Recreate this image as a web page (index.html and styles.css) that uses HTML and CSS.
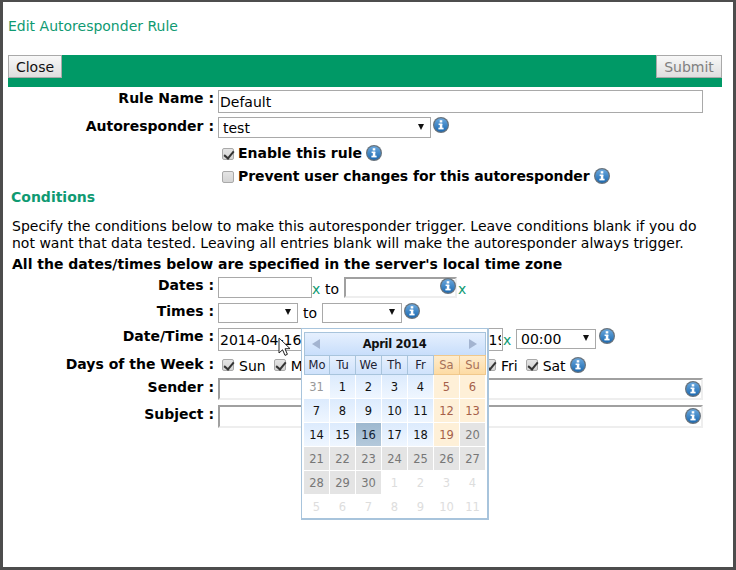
FILE: index.html
```html
<!DOCTYPE html>
<html lang="en">
<head>
<meta charset="utf-8">
<title>Edit Autoresponder Rule</title>
<link rel="stylesheet" href="styles.css">
</head>
<body>
<svg class="defs" width="0" height="0" aria-hidden="true">
  <defs>
    <linearGradient id="ig" x1="0" y1="0" x2="0" y2="1">
      <stop offset="0" stop-color="#6aa8de"/>
      <stop offset="1" stop-color="#1c69b0"/>
    </linearGradient>
    <symbol id="info" viewBox="0 0 16 16">
      <circle cx="8" cy="8" r="8" fill="#67727c"/>
      <circle cx="8" cy="8" r="6.8" fill="url(#ig)"/>
      <rect x="6.7" y="3.2" width="2.6" height="2.3" fill="#fff"/>
      <rect x="5.6" y="6.5" width="3.7" height="1.5" fill="#fff"/>
      <rect x="6.8" y="7" width="2.5" height="4" fill="#fff"/>
      <rect x="5.4" y="10.7" width="5.2" height="1.7" fill="#fff"/>
    </symbol>
  </defs>
</svg>
<div class="window">
  <div class="title">Edit Autoresponder Rule</div>
  <div class="bar">
    <button class="btn" type="button">Close</button>
    <button class="btn btn-off" type="button">Submit</button>
  </div>

  <div class="row row-name">
    <div class="label">Rule Name :</div>
    <input class="text wide" type="text" value="Default">
  </div>
  <div class="row row-auto">
    <div class="label">Autoresponder :</div>
    <span class="sel sel-auto"><select><option>test</option></select></span>
    <svg class="info"><use href="#info"/></svg>
  </div>
  <div class="row row-check1">
    <div class="label"></div>
    <label class="opt"><input class="cb" type="checkbox" checked>Enable this rule</label>
    <svg class="info"><use href="#info"/></svg>
  </div>
  <div class="row row-check2">
    <div class="label"></div>
    <label class="opt opt-long"><input class="cb" type="checkbox">Prevent user changes for this autoresponder</label>
    <svg class="info"><use href="#info"/></svg>
  </div>

  <h2 class="heading">Conditions</h2>
  <p class="intro">Specify the conditions below to make this autoresponder trigger. Leave conditions blank if you do not want that data tested. Leaving all entries blank will make the autoresponder always trigger.</p>
  <p class="note">All the dates/times below are specified in the server's local time zone</p>

  <div class="row row-dates">
    <div class="label">Dates :</div>
    <input class="text date" type="text">
    <span class="clear">x</span>
    <span class="to">to</span>
    <input class="text inset date-to" type="text">
    <svg class="info in-field"><use href="#info"/></svg>
    <span class="clear after-field">x</span>
  </div>
  <div class="row row-times">
    <div class="label">Times :</div>
    <span class="sel sel-time"><select><option></option></select></span>
    <span class="to to-time">to</span>
    <span class="sel sel-time"><select><option></option></select></span>
    <svg class="info"><use href="#info"/></svg>
  </div>
  <div class="row row-dt">
    <div class="label">Date/Time :</div>
    <input class="text dt1" type="text" value="2014-04-16">
    <input class="text dt2" type="text" value="2014-04-19">
    <span class="clear">x</span>
    <span class="sel sel-clock"><select><option>00:00</option></select></span>
    <svg class="info"><use href="#info"/></svg>
  </div>
  <div class="row row-days">
    <div class="label">Days of the Week :</div>
    <div class="days">
      <label class="day"><input class="cb" type="checkbox" checked>Sun</label>
      <label class="day"><input class="cb" type="checkbox" checked>Mon</label>
      <label class="day"><input class="cb" type="checkbox" checked>Tue</label>
      <label class="day"><input class="cb" type="checkbox" checked>Wed</label>
      <label class="day"><input class="cb" type="checkbox" checked>Thu</label>
      <label class="day"><input class="cb" type="checkbox" checked>Fri</label>
      <label class="day"><input class="cb" type="checkbox" checked>Sat</label>
    </div>
    <svg class="info"><use href="#info"/></svg>
  </div>
  <div class="row row-sender">
    <div class="label">Sender :</div>
    <input class="text inset wide" type="text">
    <svg class="info in-wide"><use href="#info"/></svg>
  </div>
  <div class="row row-subject">
    <div class="label">Subject :</div>
    <input class="text inset wide" type="text">
    <svg class="info in-wide"><use href="#info"/></svg>
  </div>

  <div class="calendar">
    <div class="cal-head">
      <span class="arrow arrow-l"></span>
      <span class="cal-title">April 2014</span>
      <span class="arrow arrow-r"></span>
    </div>
    <div class="cal-grid">
      <div class="wd">Mo</div><div class="wd">Tu</div><div class="wd">We</div><div class="wd">Th</div><div class="wd">Fr</div><div class="wd we">Sa</div><div class="wd we">Su</div>
      <div class="c other">31</div><div class="c">1</div><div class="c">2</div><div class="c">3</div><div class="c">4</div><div class="c end">5</div><div class="c end">6</div>
      <div class="c">7</div><div class="c">8</div><div class="c">9</div><div class="c">10</div><div class="c">11</div><div class="c end">12</div><div class="c end">13</div>
      <div class="c">14</div><div class="c">15</div><div class="c today">16</div><div class="c">17</div><div class="c">18</div><div class="c end">19</div><div class="c off">20</div>
      <div class="c off">21</div><div class="c off">22</div><div class="c off">23</div><div class="c off">24</div><div class="c off">25</div><div class="c off">26</div><div class="c off">27</div>
      <div class="c off">28</div><div class="c off">29</div><div class="c off">30</div><div class="c none">1</div><div class="c none">2</div><div class="c none">3</div><div class="c none">4</div>
      <div class="c none">5</div><div class="c none">6</div><div class="c none">7</div><div class="c none">8</div><div class="c none">9</div><div class="c none">10</div><div class="c none">11</div>
    </div>
  </div>

  <svg class="cursor" width="13" height="20" viewBox="0 0 13 20" aria-hidden="true">
    <path d="M1 1 V16 L4.6 12.8 L7 18.4 L9.4 17.3 L7 11.8 L12 11.6 Z" fill="#fff" stroke="#222" stroke-width="1"/>
  </svg>
</div>
</body>
</html>
```
FILE: styles.css
```css
* { box-sizing: border-box; }
html, body { margin: 0; padding: 0; background: #fff; }
body { font-family: "DejaVu Sans", Verdana, sans-serif; font-size: 14px; color: #000; }
.defs { position: absolute; }
.window {
  position: relative;
  width: 736px;
  height: 570px;
  border-style: solid;
  border-color: #4d4d4d;
  border-width: 2px 3px 3px 3px;
  padding: 0 11px 0 5px;
  overflow: hidden;
}
.title { height: 53px; padding-top: 16px; line-height: 17px; color: #0f9a72; font-size: 14px; }
.bar { height: 32px; background: #009966; display: flex; justify-content: space-between; align-items: flex-start; }
.btn {
  height: 23px;
  padding: 0;
  border: 1px solid #a9a9a9;
  background: linear-gradient(#f8f8f8, #dedede);
  font: 14px "DejaVu Sans", Verdana, sans-serif;
  color: #111;
  width: 54px;
}
.btn-off { width: 66px; color: #808080; }

.row { display: flex; align-items: flex-start; }
.label { width: 206px; margin-right: 4px; flex: none; text-align: right; font-weight: bold; line-height: 17px; }
.text {
  height: 23px;
  border: 1px solid #a9a9a9;
  background: #fff;
  padding: 1px 1px;
  margin: 0;
  font: 14px "DejaVu Sans", Verdana, sans-serif;
  color: #000;
  outline: none;
  flex: none;
}
.inset { border: 2px solid; border-color: #a0a0a0 #eeeeee #eeeeee #a0a0a0; }
.wide { width: 485px; }
.info { width: 16px; height: 16px; flex: none; margin-left: 2px; }

.sel { position: relative; display: block; flex: none; height: 21px; }
.sel select {
  appearance: none;
  display: block;
  width: 100%;
  height: 100%;
  border: 1px solid #a9a9a9;
  background: #fff;
  padding: 0 0 0 4px;
  margin: 0;
  font: 14px "DejaVu Sans", Verdana, sans-serif;
  color: #000;
  border-radius: 0;
}
.sel::after {
  content: "";
  position: absolute;
  right: 7px;
  top: calc(50% - 4px);
  border-style: solid;
  border-width: 6px 3.5px 0 3.5px;
  border-color: #111 transparent transparent transparent;
}
.sel-auto { width: 213px; }
.sel-time { width: 80px; height: 20px; }
.sel-clock { width: 80px; height: 20px; margin-left: 6px; margin-top: 1px; }

.cb {
  appearance: none;
  position: relative;
  width: 12px;
  height: 12px;
  margin: 0 5px 0 0;
  flex: none;
  border: 1px solid #a9a9a9;
  border-radius: 2px;
  background: linear-gradient(#e4e4e4, #d4d4d4);
}
.cb:checked::after {
  content: "";
  position: absolute;
  left: 3px;
  top: 0;
  width: 4px;
  height: 8px;
  border-style: solid;
  border-color: #333;
  border-width: 0 2px 2px 0;
  transform: rotate(40deg);
}
.opt { display: flex; align-items: center; margin-left: 4px; font-weight: bold; line-height: 17px; }
.opt .cb { margin-right: 4px; }
.opt-long { letter-spacing: -0.09px; }
.row-check1 .info, .row-check2 .info { margin-left: 4px; }

.row-name { margin-top: 3px; }
.row-auto { margin-top: 4px; }
.row-auto .label { padding-top: 1px; }
.row-check1 { margin-top: 7px; }
.row-check2 { margin-top: 6px; }

.heading { margin: 4px 0 0 3px; font-size: 14px; line-height: 17px; color: #0f9a72; font-weight: bold; }
.intro { margin: 12px 0 0 4px; width: 700px; line-height: 17px; }
.note { margin: 4px 0 0 4px; line-height: 17px; font-weight: bold; white-space: nowrap; }

.clear { color: #0f9a72; line-height: 17px; margin-top: 4px; width: 7px; flex: none; }
.to { margin-left: 6px; margin-right: 5px; line-height: 17px; margin-top: 4px; flex: none; }
.date { width: 94px; height: 21px; }
.date-to { width: 113px; height: 21px; }
.in-field { margin-left: -17px; margin-top: 1px; }
.after-field { margin-left: 2px; }

.row-dates { margin-top: 4px; }
.row-times { margin-top: 5px; }
.to-time { margin-left: 5px; margin-right: 5px; margin-top: 2px; }
.row-dt { margin-top: 5px; }
.dt1 { width: 85px; height: 23px; }
.dt2 { width: 80px; height: 23px; margin-left: 120px; }
.sel-clock + .info { margin-top: 0; margin-left: 3px; }
.row-days { margin-top: 5px; }
.days { display: flex; margin-left: 4px; }
.day { display: flex; align-items: center; margin-right: 8px; line-height: 17px; padding-top: 2px; }
.day .cb { margin-bottom: 4px; }
.day:last-child { margin-right: 0; }
.row-days .info { margin-left: 4px; margin-top: 1px; }
.row-sender { margin-top: 3px; }
.row-sender .text { height: 22px; }
.row-sender .label, .row-subject .label { padding-top: 1px; }
.row-subject { margin-top: 5px; }
.in-wide { margin-left: -18px; margin-top: 3px; }

.calendar {
  position: absolute;
  left: 298px;
  top: 326px;
  width: 188px;
  height: 192px;
  background: #fff;
  border: 1px solid #a8c4dc;
  border-bottom-width: 2px;
  border-right-width: 2px;
  padding: 3px 2px 2px;
  font-size: 11.5px;
}
.cal-head {
  height: 23px;
  display: flex;
  align-items: center;
  justify-content: space-between;
  padding: 0 8px 0 7px;
  background: linear-gradient(#e6f0fe, #c8defb);
  border: 1px solid #a8c4dc;
  border-bottom: 0;
  width: 182px;
}
.cal-title { font-weight: bold; color: #111; letter-spacing: -0.3px; }
.arrow { width: 0; height: 0; border-style: solid; border-width: 5px 0 5px 0; border-color: transparent; }
.arrow-l { border-right: 8px solid #a3b4d0; }
.arrow-r { border-left: 8px solid #a3b4d0; }
.cal-grid { display: grid; grid-template-columns: repeat(7, 26px); grid-auto-rows: 24px; }
.wd {
  height: 20px;
  display: flex;
  align-items: center;
  justify-content: center;
  background: linear-gradient(#e6f0fe, #cfe2fb);
  border: 1px solid #a8c4dc;
  border-left-width: 0;
  color: #223;
}
.wd:first-child { border-left-width: 1px; }
.we { background: linear-gradient(#feeccd, #fddba4); border-color: #f0c88c; color: #a5705a; }
.c {
  height: 23px;
  width: 25px;
  margin-top: -4px;
  display: flex;
  align-items: center;
  justify-content: center;
  background: linear-gradient(#dcebfd, #eff6ff);
  color: #111;
}
.other { background: #fff; color: #999; }
.end { background: #fef0d8; color: #a5604a; }
.off { background: #e4e4e4; color: #777; }
.none { background: #fff; color: #ddd; }
.today { background: linear-gradient(#9db8cf, #b4c9db); color: #123; }

.cursor { position: absolute; left: 275px; top: 335px; }
```
